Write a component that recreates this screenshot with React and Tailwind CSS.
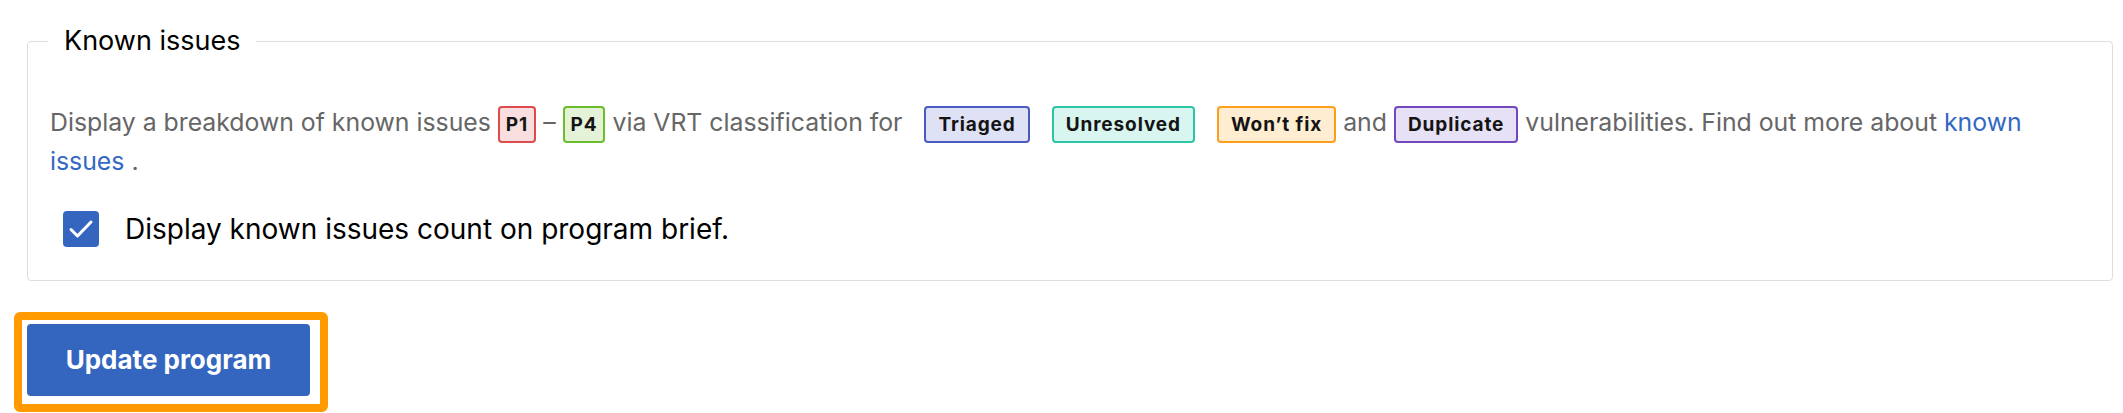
import React from "react";

const Badge = ({ className = "", children }) => (
    <span
        className={`inline-block align-middle h-[37px] border-2 rounded-[4px] text-[19px] leading-[33px] font-bold tracking-[0.9px] text-[#141414] ${className}`}
    >
        {children}
    </span>
);

export default function App() {
    return (
        <div className="bg-white w-[2123px] h-[413px] pt-[24px] pl-[27px] pr-[10px] font-['Inter',sans-serif]">
            <fieldset className="border border-[#dedede] rounded-[4px] px-[22px] pb-[33px]">
                <legend className="px-[16px] -ml-[2px] text-[27px] leading-[34px] text-black">
                    Known issues
                </legend>

                {/* description */}
                <p className="mt-[46px] text-[24.8px] leading-[36px] text-[#666666]">
                    Display a breakdown of known issues{" "}
                    <Badge className="px-[6px] bg-[#f8dede] border-[#dd4c4c]">P1</Badge> –{" "}
                    <Badge className="px-[6px] bg-[#e4f2d7] border-[#6cbd2c]">P4</Badge> via VRT classification for{" "}
                    <Badge className="ml-[15px] px-[12px] bg-[#dfe2f4] border-[#4a5bbf]">Triaged</Badge>{" "}
                    <Badge className="ml-[15px] px-[12px] bg-[#d8f5ef] border-[#2cc5a6]">Unresolved</Badge>{" "}
                    <Badge className="ml-[15px] px-[12px] bg-[#ffedd2] border-[#ff9e1a]">Won’t fix</Badge> and{" "}
                    <Badge className="px-[12px] bg-[#e6e1f4] border-[#7447bd]">Duplicate</Badge> vulnerabilities. Find
                    out more about{" "}
                    <a href="#" className="text-[#3468c4]">
                        known issues
                    </a>{" "}
                    .
                </p>

                <label className="mt-[32px] ml-[13px] flex items-center gap-[26px] text-[28px] leading-[36px] text-black">
                    <span className="flex items-center justify-center w-[36px] h-[36px] rounded-[4px] bg-[#3566bf]">
                        <svg width="36" height="36" viewBox="0 0 36 36" fill="none">
                            <polyline
                                points="8,18.5 14.5,25 28,11"
                                stroke="white"
                                strokeWidth="3"
                                strokeLinecap="round"
                                strokeLinejoin="round"
                            />
                        </svg>
                    </span>
                    Display known issues count on program brief.
                </label>
            </fieldset>

            {/* submit with focus ring */}
            <div className="mt-[31px] -ml-[13px] inline-block border-8 border-[#ff9a00] rounded-[6px] bg-white pt-[4px] pl-[5px] pr-[10px] pb-[8px]">
                <button
                    type="button"
                    className="block w-[283px] h-[72px] rounded-[4px] bg-[#3566bf] text-white text-[26px] font-bold"
                >
                    Update program
                </button>
            </div>
        </div>
    );
}
